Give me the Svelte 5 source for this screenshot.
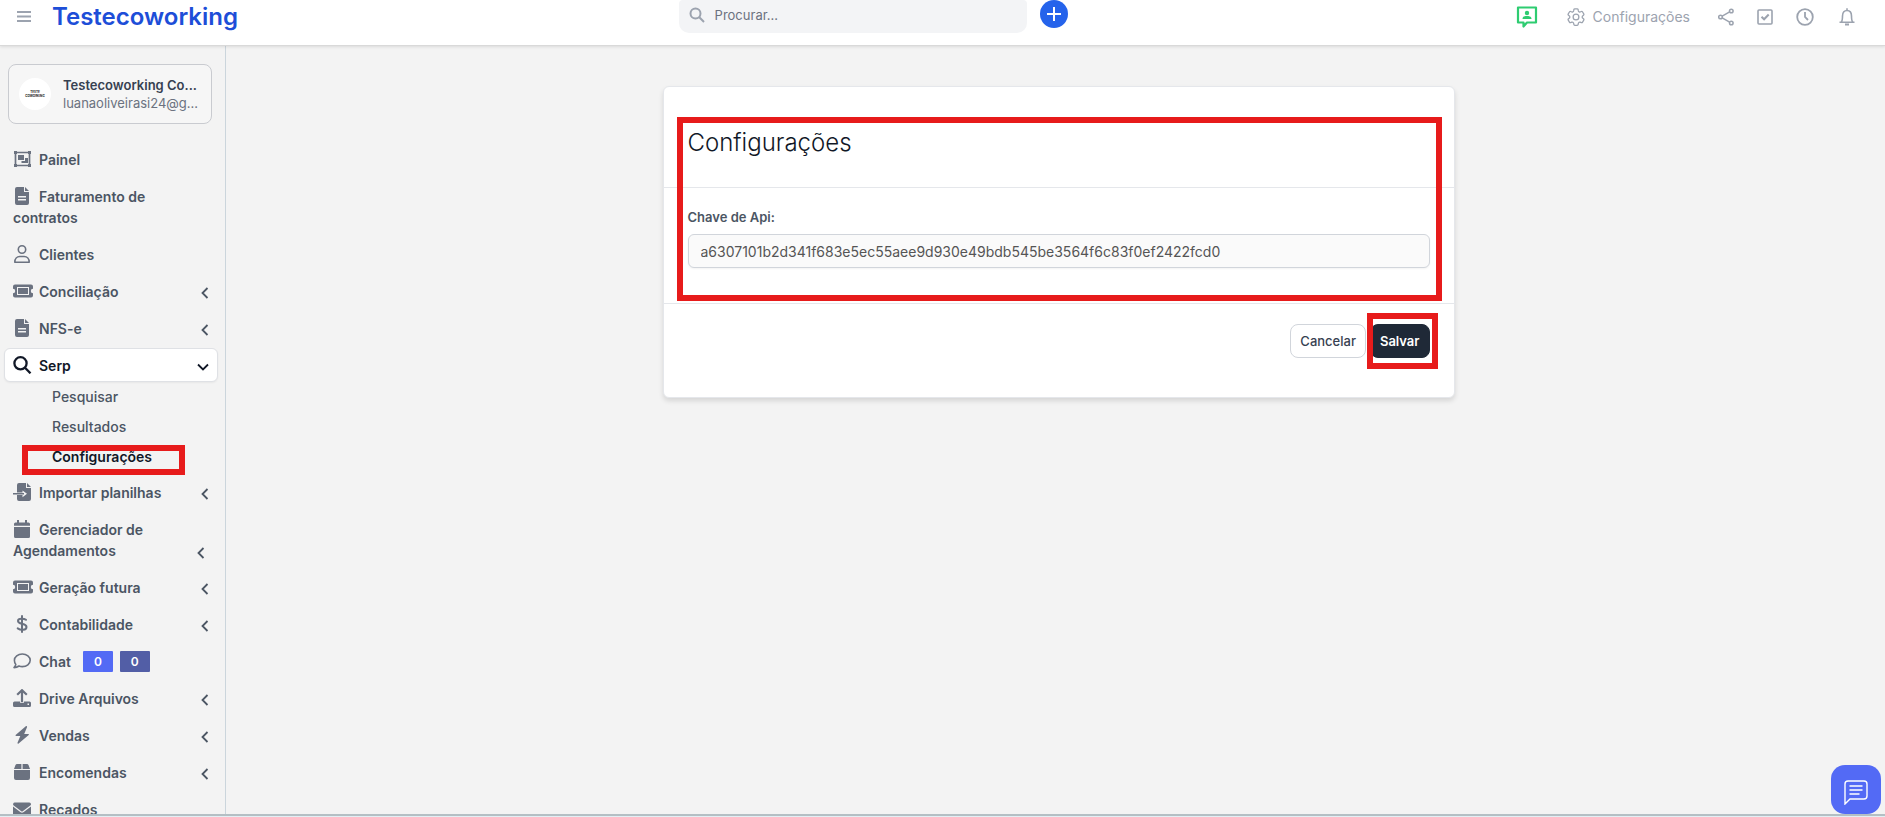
<script lang="ts">
	type Item = {
		label: string;
		icon: string;
		wrap?: boolean;
		arrow?: boolean;
		open?: boolean;
		badges?: number[];
		children?: string[];
	};

	let search = '';
	let apiKey = 'a6307101b2d341f683e5ec55aee9d930e49bdb545be3564f6c83f0ef2422fcd0';
	let current = 'Configurações';

	let items: Item[] = [
		{ label: 'Painel', icon: 'panel' },
		{ label: 'Faturamento de contratos', icon: 'file' },
		{ label: 'Clientes', icon: 'user' },
		{ label: 'Conciliação', icon: 'ticket', arrow: true },
		{ label: 'NFS-e', icon: 'file', arrow: true },
		{
			label: 'Serp',
			icon: 'search',
			arrow: true,
			open: true,
			children: ['Pesquisar', 'Resultados', 'Configurações']
		},
		{ label: 'Importar planilhas', icon: 'import', arrow: true },
		{ label: 'Gerenciador de Agendamentos', icon: 'calendar', arrow: true, wrap: true },
		{ label: 'Geração futura', icon: 'ticket', arrow: true },
		{ label: 'Contabilidade', icon: 'dollar', arrow: true },
		{ label: 'Chat', icon: 'comment', badges: [0, 0] },
		{ label: 'Drive Arquivos', icon: 'upload', arrow: true },
		{ label: 'Vendas', icon: 'bolt', arrow: true },
		{ label: 'Encomendas', icon: 'box', arrow: true },
		{ label: 'Recados', icon: 'mail' }
	];
</script>

<div class="app">
	<header class="topbar">
		<div class="brand">
			<button class="icon-btn" aria-label="Menu">
				<svg width="14" height="12" viewBox="0 0 14 12"><path d="M0 1h14M0 5.500h14M0 10h14" stroke="#9ca3af" stroke-width="2" /></svg>
			</button>
			<a class="logo" href="#inicio">Testecoworking</a>
		</div>

		<div class="middle">
			<label class="search">
				<svg width="16" height="16" viewBox="0 0 16 16" fill="none" stroke="#9ca3af" stroke-width="2"><circle cx="6.500" cy="6.500" r="5" /><path d="M10.300 10.300L15 15" /></svg>
				<input type="text" placeholder="Procurar..." aria-label="Procurar" bind:value={search} />
			</label>
			<button class="add" aria-label="Adicionar">
				<svg width="14" height="14" viewBox="0 0 14 14"><path d="M7 0v14M0 7h14" stroke="#fff" stroke-width="2" /></svg>
			</button>
		</div>

		<nav class="tools">
			<a href="#contato" class="support" aria-label="Atendimento">
				<svg width="22" height="22" viewBox="0 0 22 22"><path d="M2 1.500h18v15H11l-3.500 4v-4H2z" fill="none" stroke="#2ecc71" stroke-width="2.200" stroke-linejoin="round" /><circle cx="11" cy="7" r="2.200" fill="#2ecc71" /><path d="M6.500 13c0-3 3-3 4.500-3s4.500 0 4.500 3z" fill="#2ecc71" /></svg>
			</a>
			<a href="#configuracoes" class="settings">
				<svg width="18" height="18" viewBox="2 2 20 20" fill="none" stroke="#9ca3af" stroke-width="1.400" stroke-linejoin="round"><path d="M9.600 3.900c.1-.6.6-.9 1.100-.9h2.600c.5 0 1 .4 1.100.9l.2 1.300c.1.400.300.700.600.900l.4.200c.3.200.700.200 1.100.1l1.200-.5c.5-.2 1.100 0 1.400.5l1.300 2.200c.3.500.2 1.100-.3 1.400l-1 .9c-.3.200-.4.600-.4 1v.3c0 .4.100.700.400 1l1 .8c.5.400.6 1 .3 1.500l-1.300 2.200c-.3.500-.9.700-1.400.5l-1.200-.5c-.4-.1-.8-.1-1.100.1l-.4.300c-.3.200-.5.500-.6.900l-.2 1.200c-.1.600-.6 1-1.100 1h-2.600c-.5 0-1-.4-1.100-1l-.2-1.200c-.1-.4-.3-.7-.6-.9l-.4-.3c-.3-.2-.7-.2-1.100-.1l-1.200.5c-.5.200-1.100 0-1.400-.5l-1.300-2.200c-.3-.5-.2-1.100.3-1.500l1-.8c.3-.3.4-.6.4-1v-.3c0-.4-.1-.8-.4-1l-1-.9c-.5-.3-.6-.9-.3-1.400l1.300-2.200c.3-.5.9-.7 1.400-.5l1.200.5c.4.100.8.100 1.100-.1l.4-.2c.3-.2.5-.5.600-.9z" /><circle cx="12" cy="12" r="3.200" /></svg>
				Configurações
			</a>
			<button class="icon-btn" aria-label="Compartilhar">
				<svg width="16" height="18" viewBox="0 0 16 18" fill="none" stroke="#9ca3af" stroke-width="1.500"><circle cx="2.500" cy="9" r="1.800" /><circle cx="13.300" cy="3" r="1.800" /><circle cx="13.300" cy="15" r="1.800" /><path d="M4.200 8.100L11.600 3.900M4.200 9.900l7.400 4.200" /></svg>
			</button>
			<button class="icon-btn" aria-label="Tarefas">
				<svg width="16" height="16" viewBox="0 0 16 16" fill="none" stroke="#9ca3af" stroke-width="1.600"><rect x="1" y="1" width="14" height="14" rx="1" /><path d="M4.500 7.700l2.600 2.600 4.600-4.800" stroke-width="2" /></svg>
			</button>
			<button class="icon-btn" aria-label="Histórico">
				<svg width="18" height="18" viewBox="0 0 18 18" fill="none" stroke="#9ca3af" stroke-width="1.800"><circle cx="9" cy="9" r="7.800" /><path d="M9 4v5l3 3" /></svg>
			</button>
			<button class="icon-btn bell" aria-label="Notificações">
				<svg width="16" height="18" viewBox="0 0 16 18" fill="none" stroke="#9ca3af" stroke-width="1.600"><path d="M8 .3v2M.5 14.200h15M2.200 14c1-.8 1.300-2 1.300-6 0-3.700 2-5.500 4.500-5.500s4.500 1.800 4.500 5.500c0 4 .3 5.200 1.300 6" /><path d="M6 16.500h4" stroke-width="2" /></svg>
			</button>
		</nav>
	</header>

	<div class="body">
		<aside class="sidebar">
			<a class="profile" href="#perfil">
				<span class="avatar"><b>TESTE</b><b>COWORKING</b></span>
				<span class="who">
					<span class="name">Testecoworking Co...</span>
					<span class="email">luanaoliveirasi24@g...</span>
				</span>
			</a>

			<ul class="menu">
				{#each items as item}
					<li>
						<a class="item" class:open={item.open} href="#menu">
							<span class="text" class:wrap={item.wrap}>
								<span class="icon">
									<svg width="20" height="18" viewBox="0 0 20 18" fill="currentColor">
										{#if item.icon === 'panel'}
											<path d="M2.500 2.500h14v13h-14z" fill="none" stroke="currentColor" stroke-width="1.700" />
											<path d="M1 1h3v3H1zM15 1h3v3h-3zM1 14h3v3H1zM15 14h3v3h-3zM5 5h6v5H5z" />
											<path d="M12 8h3v5H8.500v-2H12z" />
										{:else if item.icon === 'file'}
											<path fill-rule="evenodd" d="M4 0h7v5h5v11a2 2 0 0 1-2 2H4a2 2 0 0 1-2-2V2a2 2 0 0 1 2-2zM5 9v1.400h8V9zm0 3v1.400h8V12z" />
											<path d="M12 0l4 4h-4z" />
										{:else if item.icon === 'user'}
											<g fill="none" stroke="currentColor" stroke-width="1.600"><circle cx="9" cy="4.500" r="3.700" /><path d="M1.800 17.200c0-3.500 2.200-5.700 5-5.700h4.400c2.800 0 5 2.200 5 5.700z" stroke-linejoin="round" /></g>
										{:else if item.icon === 'ticket'}
											<path fill-rule="evenodd" d="M0 4.500A2 2 0 0 1 2 2.500h16a2 2 0 0 1 2 2v2.300a2.200 2.200 0 0 0 0 4.400v2.300a2 2 0 0 1-2 2H2a2 2 0 0 1-2-2v-2.300a2.200 2.200 0 0 0 0-4.400zM4 5v8h12V5z" />
											<path d="M5 6h10v6H5z" />
										{:else if item.icon === 'search'}
											<g fill="none" stroke="currentColor" stroke-width="2.300"><circle cx="7.500" cy="7.300" r="6.100" /><path d="M12 11.800L17.500 17.300" /></g>
										{:else if item.icon === 'import'}
											<path fill-rule="evenodd" d="M6 0h7v5h5v11a2 2 0 0 1-2 2H6a2 2 0 0 1-2-2v-4h5.500v2.200l4.500-3.400-4.500-3.400v2H4V2a2 2 0 0 1 2-2z" />
											<path d="M14 0l4 4h-4zM0 10h11v1.500H0z" />
										{:else if item.icon === 'calendar'}
											<path d="M1 4a1.500 1.500 0 0 1 1.500-1.500H4V0h2v2.500h6V0h2v2.500h1.500A1.500 1.500 0 0 1 17 4v1.800H1zM1 7h16v9.500a1.500 1.500 0 0 1-1.500 1.500h-13A1.500 1.500 0 0 1 1 16.500z" />
										{:else if item.icon === 'dollar'}
											<g fill="none" stroke="currentColor" stroke-width="2" stroke-linecap="round"><path d="M9 1v16" /><path d="M13 4.800C11.500 3.600 5 2.500 5 5.900c0 3.800 8.500 2 8.500 6 0 3.600-6 3.400-8.800 1.500" /></g>
										{:else if item.icon === 'comment'}
											<path d="M9.300 2c4.400 0 7.900 2.700 7.900 6.300s-3.500 6.300-7.900 6.300c-1.200 0-2.300-.2-3.300-.6-1.300 1-3 1.600-5 1.600 1-.9 1.700-2 1.800-3.200C1.900 11.300 1.400 9.900 1.400 8.300 1.400 4.700 4.900 2 9.300 2z" fill="none" stroke="currentColor" stroke-width="1.600" stroke-linejoin="round" />
										{:else if item.icon === 'upload'}
											<path d="M9 1v12M4.200 5.800L9 1.200l4.800 4.600" fill="none" stroke="currentColor" stroke-width="2.200" />
											<path fill-rule="evenodd" d="M1.500 12.500H7v1.300h4v-1.300h5.500A1.500 1.500 0 0 1 18 14v2.500a1.500 1.500 0 0 1-1.500 1.500h-15A1.500 1.500 0 0 1 0 16.500V14a1.500 1.500 0 0 1 1.500-1.500zM14.500 14.500v1.500H16v-1.500z" />
										{:else if item.icon === 'bolt'}
											<path d="M12.800.2L2.600 8.900c-.4.400-.2 1 .4 1h4.300L4.500 16.700c-.3.800.5 1.400 1.100.9L15.700 9c.5-.4.200-1.100-.4-1.100H11.200L14 1.200c.3-.8-.5-1.500-1.200-1z" />
										{:else if item.icon === 'box'}
											<path d="M4 1h4.400v5H1l1.500-4A1.700 1.700 0 0 1 4 1zM9.600 1H14a1.700 1.700 0 0 1 1.500 1L17 6H9.600zM1 7h16v8a2 2 0 0 1-2 2H3a2 2 0 0 1-2-2z" />
										{:else}
											<path d="M1.700 2.500h14.600A1.700 1.700 0 0 1 18 4.200c0 .5-.3 1-.7 1.300L9.700 11.200a1.200 1.200 0 0 1-1.400 0L.7 5.500A1.700 1.700 0 0 1 1.700 2.500z" /><path d="M0 6.500l7.600 5.700c.8.600 2 .6 2.800 0L18 6.500V14a2 2 0 0 1-2 2H2a2 2 0 0 1-2-2z" />
										{/if}
									</svg>
								</span>{item.label}
							</span>
							{#if item.badges}
								<span class="badges">
									{#each item.badges as badge}
										<span class="badge">{badge}</span>
									{/each}
								</span>
							{/if}
							{#if item.arrow}
								<svg class="arrow" class:down={item.open} width="12" height="12" viewBox="0 0 12 12"><path d="M8.500 1L3.500 6l5 5" fill="none" stroke="currentColor" stroke-width="1.800" /></svg>
							{/if}
						</a>
						{#if item.children}
							<ul class="submenu">
								{#each item.children as child}
									<li><a href="#serp" class:active={child === current}>{child}</a></li>
								{/each}
							</ul>
						{/if}
					</li>
				{/each}
			</ul>
		</aside>

		<main>
			<form class="card" on:submit|preventDefault>
				<div class="form-area">
					<h1>Configurações</h1>
					<div class="field">
						<label for="api-key">Chave de Api:</label>
						<input id="api-key" type="text" bind:value={apiKey} />
					</div>
				</div>
				<div class="actions">
					<button type="button" class="btn">Cancelar</button>
					<span class="save"><button type="submit" class="btn primary">Salvar</button></span>
				</div>
			</form>
		</main>
	</div>

	<button class="chat" aria-label="Abrir chat">
		<svg width="26" height="26" viewBox="0 0 26 26" fill="none" stroke="#fff" stroke-width="1.400"><path d="M5 2h16a3 3 0 0 1 3 3v12a3 3 0 0 1-3 3H7l-5 5V5a3 3 0 0 1 3-3z" /><path d="M6.500 7h13M6.500 11h13M6.500 15h10" /></svg>
	</button>
</div>

<style>
	:global(body) {
		margin: 0;
		background: #e3eff4;
	}

	.app {
		position: relative;
		display: flex;
		flex-direction: column;
		box-sizing: border-box;
		height: calc(100vh - 1px);
		overflow: hidden;
		border-bottom: 2px solid #b4bfc4;
		background: #f3f3f3;
		color: #4b5563;
		font-family: Inter, 'Liberation Sans', sans-serif;
		font-size: 14px;
		line-height: 20px;
	}

	a {
		color: inherit;
		text-decoration: none;
	}

	button {
		font: inherit;
		color: inherit;
		cursor: pointer;
	}

	svg {
		display: block;
	}

	ul {
		list-style: none;
		margin: 0;
		padding: 0;
	}

	.topbar {
		position: relative;
		flex: none;
		display: grid;
		grid-template-columns: 36% auto 1fr;
		height: 45px;
		background: #fff;
		border-bottom: 1px solid #d9d9d9;
		box-shadow: 0 1px 3px rgba(0, 0, 0, 0.1);
	}

	.brand {
		display: flex;
		align-items: center;
		gap: 21px;
		height: 33px;
		padding-left: 17px;
	}

	.logo {
		color: #1d4ed8;
		font-size: 24px;
		font-weight: 600;
	}

	.icon-btn {
		padding: 0;
		border: 0;
		background: none;
	}

	.middle {
		display: flex;
		align-items: flex-start;
		gap: 13px;
	}

	.search {
		display: flex;
		align-items: center;
		gap: 10px;
		box-sizing: border-box;
		width: 348px;
		height: 33px;
		padding: 0 10px 3px;
		border-radius: 4px 4px 10px 10px;
		background: #f3f4f6;
	}

	.search input {
		flex: 1;
		min-width: 0;
		padding: 0;
		border: 0;
		outline: 0;
		background: none;
		font: inherit;
		font-size: 13px;
		color: #4b5563;
	}

	.search input::placeholder {
		color: #6b7280;
		opacity: 1;
	}

	.add {
		display: grid;
		place-items: center;
		width: 28px;
		height: 28px;
		padding: 0;
		border: 0;
		border-radius: 50%;
		background: #2563eb;
	}

	.tools {
		display: flex;
		align-items: center;
		justify-content: flex-end;
		gap: 23px;
		height: 34px;
		padding-right: 30px;
		color: #9ca3af;
	}

	.support {
		margin-right: 6px;
	}

	.settings {
		display: flex;
		align-items: center;
		gap: 8px;
		margin-right: 5px;
	}

	.bell {
		margin-left: 2px;
	}

	.body {
		flex: 1;
		display: flex;
		min-height: 0;
	}

	.sidebar {
		flex: none;
		box-sizing: border-box;
		width: 226px;
		padding: 18px 7px 0 4px;
		border-right: 1px solid #cbd5dc;
		overflow: hidden;
	}

	.profile {
		display: flex;
		align-items: center;
		gap: 12px;
		box-sizing: border-box;
		height: 60px;
		margin: 0 6px 18px 4px;
		padding: 0 8px 0 10px;
		border: 1px solid #c9cbd0;
		border-radius: 8px;
		background: #f6f6f6;
	}

	.avatar {
		flex: none;
		display: flex;
		flex-direction: column;
		align-items: center;
		justify-content: center;
		width: 32px;
		height: 32px;
		border-radius: 50%;
		background: #fff;
		color: #222;
		font-size: 3px;
		line-height: 4px;
	}

	.name,
	.email {
		display: block;
		white-space: nowrap;
		line-height: 18px;
	}

	.name {
		color: #374151;
		font-size: 13px;
		font-weight: 600;
	}

	.email {
		color: #6b7280;
		font-size: 13px;
	}

	.item {
		display: flex;
		align-items: center;
		margin-bottom: 3px;
		padding: 6px 8px 5px;
		border: 1px solid transparent;
		border-radius: 6px;
		font-weight: 600;
		line-height: 21px;
	}

	.item.open {
		margin-bottom: 0;
		border-color: #dfe1e5;
		background: #fff;
		color: #111827;
		box-shadow: 0 1px 2px rgba(0, 0, 0, 0.05);
	}

	.text {
		max-width: 150px;
	}

	.icon {
		display: inline-block;
		width: 26px;
		height: 18px;
		color: #6b7280;
		vertical-align: -3px;
	}

	.open .icon {
		color: #111827;
	}

	.arrow {
		margin: 3px -2px 0 auto;
	}

	.arrow.down {
		margin-right: 0;
		transform: rotate(-90deg);
	}

	.wrap ~ .arrow {
		align-self: flex-end;
		margin: 0 2px 2px auto;
	}

	.badges {
		display: flex;
		gap: 7px;
		margin-left: 12px;
	}

	.badge {
		padding: 0 11px;
		border-radius: 1px;
		background: #536af5;
		color: #fff;
		font-size: 12px;
	}

	.badge + .badge {
		background: #525ea6;
	}

	.submenu {
		margin-bottom: 3px;
	}

	.submenu a {
		display: block;
		padding: 5px 0 5px 48px;
		font-weight: 500;
	}

	.submenu .active {
		position: relative;
		color: #111827;
		font-weight: 600;
	}

	/* red markers around the current page and the form */
	.active::after,
	.form-area::after,
	.save::after {
		content: '';
		position: absolute;
		border: 6px solid #e71b1b;
		pointer-events: none;
	}

	.active::after {
		inset: 3px 33px -3px 18px;
	}

	main {
		flex: 1;
		min-width: 0;
		padding: 40px 20px 40px 26px;
	}

	.card {
		box-sizing: border-box;
		max-width: 792px;
		margin: 0 auto;
		border: 1px solid #e5e7eb;
		border-radius: 6px;
		background: #fff;
		box-shadow: 0 3px 5px rgba(0, 0, 0, 0.12);
	}

	.form-area {
		position: relative;
	}

	.form-area::after {
		inset: 30px 12px 3px 13px;
	}

	h1 {
		margin: 0;
		padding: 40px 24px 28px;
		border-bottom: 1px solid #e5e7eb;
		color: #111827;
		font-size: 24px;
		font-weight: 300;
		line-height: 32px;
	}

	.field {
		padding: 19px 24px 35px;
		border-bottom: 1px solid #e5e7eb;
	}

	.field label {
		display: block;
		margin-bottom: 7px;
		font-size: 13px;
		font-weight: 600;
	}

	.field input {
		display: block;
		box-sizing: border-box;
		width: 100%;
		height: 34px;
		padding: 0 12px;
		border: 1px solid #d1d5db;
		border-radius: 6px;
		background: #fafafa;
		box-shadow: 0 1px 2px rgba(0, 0, 0, 0.05);
		color: #555;
		font: inherit;
	}

	.actions {
		display: flex;
		justify-content: flex-end;
		gap: 4px;
		padding: 20px 24px 39px;
	}

	.btn {
		display: block;
		height: 34px;
		padding: 0 9px;
		border: 1px solid #d1d5db;
		border-radius: 8px;
		background: #fff;
		color: #374151;
		font-size: 13px;
		font-weight: 500;
	}

	.primary {
		border-color: #1f2937;
		background: #1f2937;
		color: #fff;
		font-weight: 600;
	}

	.save {
		position: relative;
	}

	.save::after {
		inset: -11px -8px -11px -3px;
	}

	.chat {
		position: absolute;
		right: 4px;
		bottom: 0;
		display: grid;
		place-items: center;
		width: 50px;
		height: 49px;
		padding: 4px 0 0;
		border: 0;
		border-radius: 14px;
		background: #536af5;
	}
</style>
